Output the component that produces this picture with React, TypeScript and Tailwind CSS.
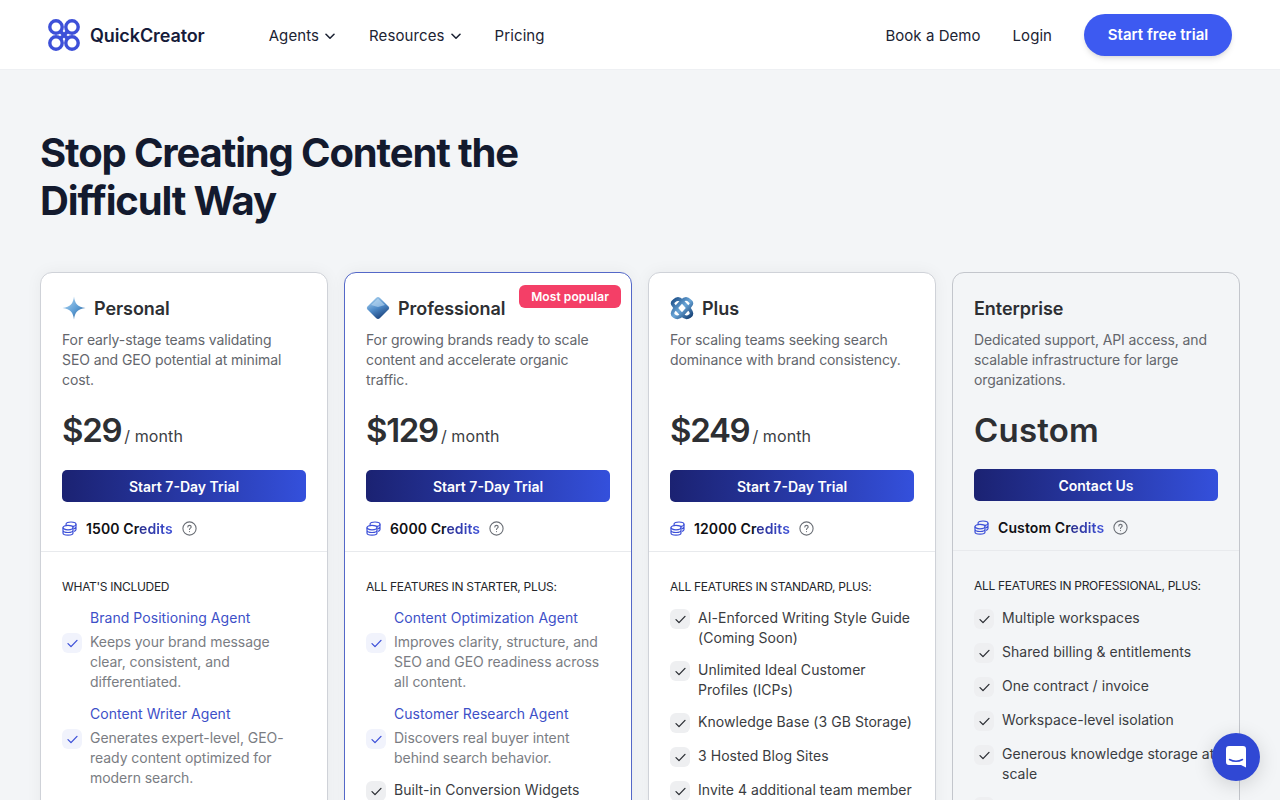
import React from "react";

const F = "[font-family:Inter,'Noto_Sans',sans-serif]";

function Logo() {
  return (
    <svg width="32" height="32" viewBox="0 0 32 32" fill="none" stroke="#3d50d8" strokeWidth="3.4" strokeLinecap="round">
      <circle cx="8" cy="8" r="6.2" />
      <circle cx="24" cy="8" r="6.2" />
      <circle cx="8" cy="24" r="6.2" />
      <circle cx="24" cy="24" r="6.2" />
      <path d="M13 13 Q16 16 19 19 M19 13 Q16 16 13 19" strokeWidth="3.8" />
    </svg>
  );
}

function Chevron() {
  return (
    <svg width="10" height="7" viewBox="0 0 10 7" fill="none" stroke="#1c2333" strokeWidth="1.6" strokeLinecap="round" strokeLinejoin="round">
      <path d="M1 1.3 L5 5.2 L9 1.3" />
    </svg>
  );
}

function Sparkle() {
  return (
    <svg width="24" height="24" viewBox="0 0 24 24">
      <defs>
        <linearGradient id="sp" x1="0" y1="0" x2="1" y2="1">
          <stop offset="0" stopColor="#bfe0f7" />
          <stop offset="0.55" stopColor="#5f9fd6" />
          <stop offset="1" stopColor="#1f4f86" />
        </linearGradient>
      </defs>
      <path d="M12 0.5 C12.8 7.5 15.5 11 23.5 12 C15.5 13 12.8 16.5 12 23.5 C11.2 16.5 8.5 13 0.5 12 C8.5 11 11.2 7.5 12 0.5 Z" fill="url(#sp)" />
    </svg>
  );
}

function Diamond() {
  return (
    <svg width="24" height="24" viewBox="0 0 24 24">
      <defs>
        <linearGradient id="di" x1="0.2" y1="0" x2="0.7" y2="1">
          <stop offset="0" stopColor="#a9d2f0" />
          <stop offset="0.5" stopColor="#4f8bc8" />
          <stop offset="1" stopColor="#173e78" />
        </linearGradient>
      </defs>
      <path d="M12 1 Q13 1 14 2 L22.5 10.5 Q24 12 22.5 13.5 L14 22 Q12 24 10 22 L1.5 13.5 Q0 12 1.5 10.5 L10 2 Q11 1 12 1 Z" fill="url(#di)" />
      <path d="M5 9 L12 2.5 L19 9 L12 11 Z" fill="#c4e0f6" opacity="0.55" />
    </svg>
  );
}

function Knot() {
  return (
    <svg width="24" height="24" viewBox="0 0 24 24" fill="none" strokeWidth="3.6">
      <defs>
        <linearGradient id="kn" x1="0" y1="0" x2="1" y2="1">
          <stop offset="0" stopColor="#1d4f88" />
          <stop offset="0.5" stopColor="#6aa6d8" />
          <stop offset="1" stopColor="#143f74" />
        </linearGradient>
      </defs>
      <path d="M4 5 Q8 1 12 5 L20 14 Q23 18 20 20 Q16 23 12 19 L4 10 Q1 7 4 5 Z" stroke="url(#kn)" />
      <path d="M20 5 Q16 1 12 5 L4 14 Q1 18 4 20 Q8 23 12 19 L20 10 Q23 7 20 5 Z" stroke="url(#kn)" />
    </svg>
  );
}

function Coins({ bg }: { bg: string }) {
  return (
    <svg width="15" height="15" viewBox="0 0 15 15" fill="none" stroke="#3d50d8" strokeWidth="1.2">
      <ellipse cx="9" cy="3.2" rx="5" ry="2.2" />
      <path d="M14 3.2 V8.5 Q14 10 12 10.4 M14 6 Q13.6 7.4 11.8 7.8" />
      <ellipse cx="6" cy="6.6" rx="5" ry="2.2" fill={bg} />
      <path d="M1 6.6 V12 C1 13.2 3.2 14.2 6 14.2 C8.8 14.2 11 13.2 11 12 V6.6 M1 9.3 C1 10.5 3.2 11.5 6 11.5 C8.8 11.5 11 10.5 11 9.3" />
    </svg>
  );
}

function Help() {
  return (
    <svg width="15" height="15" viewBox="0 0 15 15" fill="none" stroke="#6b6f76" strokeWidth="1.1" strokeLinecap="round">
      <circle cx="7.5" cy="7.5" r="6.6" />
      <path d="M5.8 6 C5.8 4.9 6.6 4.4 7.5 4.4 C8.4 4.4 9.2 5 9.2 5.9 C9.2 7.1 7.5 7.1 7.5 8.5" />
      <path d="M7.5 10.5 V10.6" />
    </svg>
  );
}

function Check({ blue }: { blue?: boolean }) {
  return (
    <span className={`mt-px flex h-5 w-5 shrink-0 items-center justify-center rounded-md ${blue ? "bg-[#f1f3fc]" : "bg-[#eeeff1]"}`}>
      <svg width="11" height="9" viewBox="0 0 11 9" fill="none" stroke={blue ? "#3d50d8" : "#2a2d33"} strokeWidth="1.3" strokeLinecap="round" strokeLinejoin="round">
        <path d="M1 4.6 L4 7.6 L10 1.4" />
      </svg>
    </span>
  );
}

type Item = { title?: string; text: string };
type Plan = {
  name: string;
  icon?: React.ReactNode;
  desc: string;
  price: string;
  unit?: string;
  cta: string;
  credits: string;
  label: string;
  popular?: boolean;
  items: Item[];
};

const plans: Plan[] = [
  {
    name: "Personal",
    icon: <Sparkle />,
    desc: "For early-stage teams validating SEO and GEO potential at minimal cost.",
    price: "$29",
    unit: "/ month",
    cta: "Start 7-Day Trial",
    credits: "1500",
    label: "WHAT'S INCLUDED",
    items: [
      { title: "Brand Positioning Agent", text: "Keeps your brand message clear, consistent, and differentiated." },
      { title: "Content Writer Agent", text: "Generates expert-level, GEO-ready content optimized for modern search." },
    ],
  },
  {
    name: "Professional",
    icon: <Diamond />,
    desc: "For growing brands ready to scale content and accelerate organic traffic.",
    price: "$129",
    unit: "/ month",
    cta: "Start 7-Day Trial",
    credits: "6000",
    label: "ALL FEATURES IN STARTER, PLUS:",
    popular: true,
    items: [
      { title: "Content Optimization Agent", text: "Improves clarity, structure, and SEO and GEO readiness across all content." },
      { title: "Customer Research Agent", text: "Discovers real buyer intent behind search behavior." },
      { text: "Built-in Conversion Widgets" },
    ],
  },
  {
    name: "Plus",
    icon: <Knot />,
    desc: "For scaling teams seeking search dominance with brand consistency.",
    price: "$249",
    unit: "/ month",
    cta: "Start 7-Day Trial",
    credits: "12000",
    label: "ALL FEATURES IN STANDARD, PLUS:",
    items: [
      { text: "AI-Enforced Writing Style Guide (Coming Soon)" },
      { text: "Unlimited Ideal Customer Profiles (ICPs)" },
      { text: "Knowledge Base (3 GB Storage)" },
      { text: "3 Hosted Blog Sites" },
      { text: "Invite 4 additional team member" },
    ],
  },
  {
    name: "Enterprise",
    desc: "Dedicated support, API access, and scalable infrastructure for large organizations.",
    price: "Custom",
    cta: "Contact Us",
    credits: "Custom",
    label: "ALL FEATURES IN PROFESSIONAL, PLUS:",
    items: [
      { text: "Multiple workspaces" },
      { text: "Shared billing & entitlements" },
      { text: "One contract / invoice" },
      { text: "Workspace-level isolation" },
      { text: "Generous knowledge storage at scale" },
      { text: "Custom onboarding & training" },
    ],
  },
];

function Card({ plan }: { plan: Plan }) {
  const enterprise = plan.name === "Enterprise";
  return (
    <div
      className={`relative h-[560px] rounded-xl border ${
        plan.popular
          ? "border-[#5468c8] bg-white shadow-[0_0_16px_rgba(0,0,0,0.05)]"
          : enterprise
            ? "border-[#c3c6cc] bg-[#f3f5f7]"
            : "border-[#cfd2d8] bg-white shadow-[0_0_16px_rgba(0,0,0,0.05)]"
      }`}
    >
      {plan.popular && (
        <span className="absolute right-[10px] top-[12px] flex h-[23px] items-center rounded-md bg-[#f43f67] px-[12px] text-[12px] font-semibold tracking-[0.1px] text-white">
          Most popular
        </span>
      )}
      <div className={`px-[21px] pt-[23px] ${enterprise ? "h-[278px]" : "h-[279px]"} border-b border-[#e8eaed]`}>
        <div className="flex h-6 items-center gap-2">
          {plan.icon}
          <span className="text-[18px] font-semibold tracking-[-0.05px] text-[#2d2f33]">{plan.name}</span>
        </div>
        <p className="mt-[10px] h-[60px] pr-2 text-[14px] leading-5 tracking-[-0.1px] text-[#63666c]">{plan.desc}</p>
        <div className={`mt-4 flex items-baseline ${enterprise ? "h-[45px]" : "h-[46px]"}`}>
          <span className={`text-[33px] font-semibold leading-[48px] text-[#2d2f33] ${enterprise ? "tracking-[0.2px]" : "tracking-[-1.3px]"}`}>{plan.price}</span>
          {plan.unit && <span className="ml-[3px] text-[16px] tracking-[0.1px] text-[#3b3e44]">{plan.unit}</span>}
        </div>
        <div className="mt-[18px] flex h-8 items-center justify-center rounded-[5px] bg-linear-to-r from-[#1b2272] to-[#3450dc] text-[14px] font-semibold text-white">
          {plan.cta}
        </div>
        <div className="mt-4 flex h-5 items-center">
          <Coins bg={enterprise ? "#f3f5f7" : "#ffffff"} />
          <span className="ml-[9px] text-[14px] font-semibold tracking-[0.1px] text-[#101014]">
            {plan.credits} Cr<span className="bg-linear-to-r from-[#2a2f90] to-[#3d50d8] bg-clip-text text-transparent">edits</span>
          </span>
          <span className="ml-[9px]">
            <Help />
          </span>
        </div>
      </div>
      <div className="px-[21px] pt-[27px]">
        <div className="text-[12px] leading-4 tracking-[-0.3px] text-[#24262b]">{plan.label}</div>
        <ul className={`flex flex-col gap-3 ${enterprise ? "mt-[14px]" : "mt-[13px]"}`}>
          {plan.items.map((it) =>
            it.title ? (
              <li key={it.title} className="flex flex-col gap-1">
                <span className="pl-7 text-[14px] leading-5 tracking-[0.05px] text-[#3d50c8]">{it.title}</span>
                <div className="flex items-start gap-2">
                  <Check blue />
                  <span className="text-[14px] leading-5 tracking-[-0.05px] text-[#7a7d83]">{it.text}</span>
                </div>
              </li>
            ) : (
              <li key={it.text} className="flex min-h-[22px] items-start gap-2">
                <Check />
                <span className="text-[14px] leading-5 tracking-[0.05px] text-[#3a3c41]">{it.text}</span>
              </li>
            ),
          )}
        </ul>
      </div>
    </div>
  );
}

export default function App() {
  return (
    <div className={`h-[800px] overflow-hidden bg-[#f3f5f7] ${F}`}>
      <header className="flex h-[70px] items-center border-b border-[#eef0f3] bg-white px-12">
        <div className="flex items-center gap-[10px]">
          <Logo />
          <span className="pt-[2px] text-[18px] font-semibold tracking-[-0.1px] text-[#161b3a]">QuickCreator</span>
        </div>
        <nav className="ml-[64px] mt-1 flex items-center gap-[34px] text-[15px] tracking-[0.1px] text-[#1c2333]">
          <span className="flex items-center gap-[6px]">Agents <Chevron /></span>
          <span className="flex items-center gap-[6px]">Resources <Chevron /></span>
          <span>Pricing</span>
        </nav>
        <div className="ml-auto flex items-center text-[15px] tracking-[0.05px] text-[#1c2333]">
          <span className="mt-1">Book a Demo</span>
          <span className="ml-8 mt-1">Login</span>
          <span className="ml-8 flex h-[42px] w-[148px] items-center justify-center rounded-full bg-[#3d5af1] pt-[2px] font-semibold text-white shadow-md">
            Start free trial
          </span>
        </div>
      </header>
      <main className="px-10 pt-[59px]">
        <h1 className="w-[520px] text-[40px] font-bold leading-[48px] tracking-[-1.15px] text-[#131a2e]">
          Stop Creating Content the Difficult Way
        </h1>
        <div className="mt-[47px] grid grid-cols-4 gap-4">
          {plans.map((p) => (
            <Card key={p.name} plan={p} />
          ))}
        </div>
      </main>
      <div className="fixed bottom-[19px] right-5 flex h-12 w-12 items-center justify-center rounded-full bg-[#3048d4] shadow-[0_4px_20px_rgba(0,0,0,0.15)]">
        <svg width="20" height="22" viewBox="0 0 20 22">
          <path d="M3 0 H17 A3 3 0 0 1 20 3 V21.5 L15 19 H3 A3 3 0 0 1 0 16 V3 A3 3 0 0 1 3 0 Z" fill="#fff" />
          <path d="M3.5 13.5 Q10 17 16.5 13.5" stroke="#3048d4" strokeWidth="1.5" fill="none" strokeLinecap="round" />
        </svg>
      </div>
    </div>
  );
}
